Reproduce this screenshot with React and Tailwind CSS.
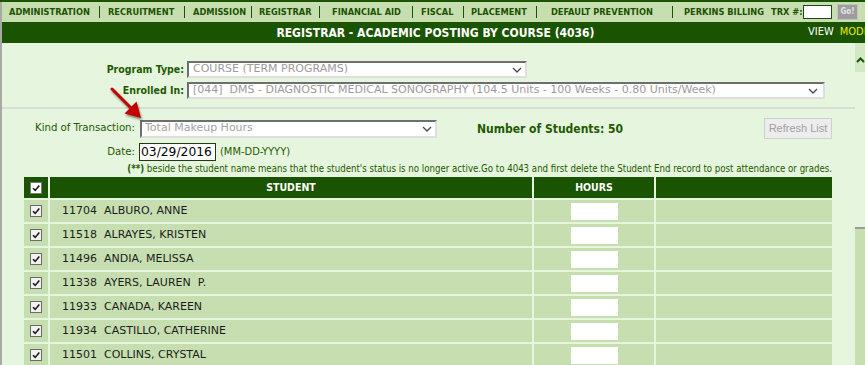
const cond = "font-['DejaVu_Sans_Condensed','DejaVu_Sans',sans-serif]";
const dv = "font-['DejaVu_Sans',sans-serif]";

function Sep({ cls }) {
  return <span className={`w-px h-[12px] bg-[#1d5200] shrink-0 ${cls}`} />;
}

function Chevron() {
  return (
    <svg width="10" height="6" viewBox="0 0 10 6" className="shrink-0">
      <path d="M1 1 L5 5 L9 1" fill="none" stroke="#4a4a4a" strokeWidth="1.3" />
    </svg>
  );
}

function Check({ header }) {
  return (
    <span
      className={`flex items-center justify-center w-[12px] h-[12px] border ${
        header ? "border-[#7a7a7a] bg-white" : "border-[#6b6b6b] bg-[#f2f2f2]"
      }`}
    >
      <svg width="10" height="10" viewBox="0 0 10 10">
        <path d="M2 5.2 L4.2 7.4 L8.3 2.4" fill="none" stroke="#1a1a1a" strokeWidth="1.6" />
      </svg>
    </span>
  );
}

const students = [
  ["11704", "ALBURO, ANNE"],
  ["11518", "ALRAYES, KRISTEN"],
  ["11496", "ANDIA, MELISSA"],
  ["11338", "AYERS, LAUREN\u00a0 P."],
  ["11933", "CANADA, KAREEN"],
  ["11934", "CASTILLO, CATHERINE"],
  ["11501", "COLLINS, CRYSTAL"],
];

export default function App() {
  return (
    <div className="relative w-[865px] h-[365px] overflow-hidden bg-[#e6f5dd] flex flex-col">
      <div className="h-[2px] bg-[#1a5400] shrink-0" />
      <div className="flex flex-1 min-h-0">
        <div className="w-[2px] bg-[#a9a9a9] shrink-0" />
        <div className="flex-1 flex flex-col min-w-0">
          {/* nav */}
          <div
            className={`h-[20px] shrink-0 bg-[#c7dfb0] flex items-center pl-[7px] whitespace-nowrap text-[9.2px] font-bold text-[#1d5200] ${cond}`}
          >
            <span className="w-[90px] shrink-0">ADMINISTRATION</span>
            <Sep cls="mr-[8px]" />
            <span className="w-[76px] shrink-0">RECRUITMENT</span>
            <Sep cls="mr-[8px]" />
            <span className="w-[58px] shrink-0">ADMISSION</span>
            <Sep cls="mr-[7px]" />
            <span className="w-[60px] shrink-0">REGISTRAR</span>
            <Sep cls="mr-[12px]" />
            <span className="w-[80px] shrink-0">FINANCIAL AID</span>
            <Sep cls="mr-[8px]" />
            <span className="w-[42px] shrink-0">FISCAL</span>
            <Sep cls="mr-[7px]" />
            <span className="w-[65px] shrink-0">PLACEMENT</span>
            <Sep cls="mr-[14px]" />
            <span className="w-[121px] shrink-0">DEFAULT PREVENTION</span>
            <Sep cls="mr-[11px]" />
            <span className="w-[87px] shrink-0">PERKINS BILLING</span>
            <span className="w-[32px] shrink-0">TRX #:</span>
            <span className="w-[29px] h-[14px] bg-white border border-[#1d4a10] shrink-0" />
            <span className="ml-[5px] w-[21px] h-[16px] bg-[#9d9d9d] border border-[#c4c4c4] text-[#e6e6e6] text-[8px] flex items-center justify-center shrink-0">
              Go!
            </span>
          </div>
          {/* header */}
          <div className="h-[21px] shrink-0 bg-[#1a5400] flex items-center whitespace-nowrap overflow-hidden">
            <div className={`w-[806px] shrink-0 pl-[61px] text-center text-white font-bold text-[12px] ${cond}`}>
              REGISTRAR - ACADEMIC POSTING BY COURSE (4036)
            </div>
            <span className={`text-white text-[11px] ${cond}`}>VIEW</span>
            <span className={`ml-[6px] text-[#eeee00] text-[11px] ${cond}`}>MODIFY</span>
          </div>
          {/* body */}
          <div className="flex flex-1 min-h-0">
            <div className="w-[853px] shrink-0 flex flex-col">
              {/* program form */}
              <div className="pt-[18px] pb-[8px] border-b-2 border-[#d8ddd3] flex flex-col gap-[4px]">
                <div className="flex items-center h-[17px]">
                  <span className={`w-[182px] text-right font-bold text-[10.5px] text-[#1e5a00] ${cond}`}>
                    Program Type:
                  </span>
                  <div className="ml-[3px] w-[340px] h-[17px] bg-white border-t-2 border-l-2 border-[#6e6e6e] border-r-2 border-b-2 border-r-[#dedede] border-b-[#dedede] flex items-center pl-[4px] pr-[3px]">
                    <span className={`flex-1 text-[11px] text-[#9c9c9c] whitespace-nowrap overflow-hidden ${dv}`}>
                      COURSE (TERM PROGRAMS)
                    </span>
                    <Chevron />
                  </div>
                </div>
                <div className="flex items-center h-[17px]">
                  <span className={`w-[182px] text-right font-bold text-[10.5px] text-[#1e5a00] ${cond}`}>
                    Enrolled In:
                  </span>
                  <div className="ml-[3px] w-[638px] h-[17px] bg-white border-t-2 border-l-2 border-[#6e6e6e] border-r-2 border-b-2 border-r-[#dedede] border-b-[#dedede] flex items-center pl-[4px] pr-[5px]">
                    <span className={`flex-1 text-[11px] text-[#9c9c9c] whitespace-nowrap overflow-hidden ${dv}`}>
                      [044]{"\u00a0 "}DMS - DIAGNOSTIC MEDICAL SONOGRAPHY (104.5 Units - 100 Weeks - 0.80 Units/Week)
                    </span>
                    <Chevron />
                  </div>
                </div>
              </div>

              <div className="pl-[22px] pr-[23px] flex flex-col">
                {/* kind row */}
                <div className="mt-[9px] h-[21px] flex items-center">
                  <span className={`w-[111px] shrink-0 text-right text-[11.3px] text-[#1e5a00] ${cond}`}>
                    Kind of Transaction:
                  </span>
                  <div className="ml-[5px] w-[297px] h-[18px] bg-white border-t-2 border-l-2 border-[#6e6e6e] border-r-2 border-b-2 border-r-[#dedede] border-b-[#dedede] flex items-center pl-[3px] pr-[3px]">
                    <span className={`flex-1 text-[11px] text-[#a3a3a3] whitespace-nowrap overflow-hidden ${dv}`}>
                      Total Makeup Hours
                    </span>
                    <Chevron />
                  </div>
                  <span className={`ml-[40px] font-bold text-[12px] text-[#1e5a00] ${cond}`}>
                    Number of Students: 50
                  </span>
                  <span className="ml-auto w-[68px] h-[21px] border border-[#cfcfcf] bg-[#ededed] flex items-center justify-center text-[11px] text-[#a0a0a0] font-['Liberation_Sans',Arial,sans-serif]">
                    Refresh List
                  </span>
                </div>
                {/* date row */}
                <div className="mt-[4px] h-[18px] flex items-center">
                  <span className={`w-[111px] shrink-0 text-right text-[11.3px] text-[#1e5a00] ${cond}`}>
                    Date:
                  </span>
                  <div className={`ml-[4px] w-[77px] h-[18px] bg-white border border-[#1d3d10] flex items-center pl-[1px] text-[12.3px] text-black ${dv}`}>
                    03/29/2016
                  </div>
                  <span className={`ml-[4px] text-[11px] text-[#1e5a00] ${cond}`}>(MM-DD-YYYY)</span>
                </div>
                {/* note */}
                <div className={`h-[16px] flex items-center justify-end whitespace-nowrap text-[9.6px] text-[#1e5a00] ${cond}`}>
                  <span className="font-bold">(**)</span>
                  <span>
                    &nbsp;beside the student name means that the student's status is no longer active.Go to 4043 and first delete the Student End record to post attendance or grades.
                  </span>
                </div>
                {/* table */}
                <div className="flex flex-col gap-y-[2px]">
                  <div className="grid grid-cols-[24px_482px_120px_176px] gap-x-[2px] h-[21px]">
                    <div className="bg-[#1a5400] flex items-center justify-center">
                      <Check header />
                    </div>
                    <div className={`bg-[#1a5400] flex items-center justify-center text-white font-bold text-[10.5px] ${cond}`}>
                      STUDENT
                    </div>
                    <div className={`bg-[#1a5400] flex items-center justify-center text-white font-bold text-[10.5px] ${cond}`}>
                      HOURS
                    </div>
                    <div className="bg-[#1a5400]" />
                  </div>
                  {students.map(([id, name]) => (
                    <div key={id} className="grid grid-cols-[24px_482px_120px_176px] gap-x-[2px] h-[22px]">
                      <div className="bg-[#c7dfb0] flex items-center justify-center">
                        <Check />
                      </div>
                      <div className={`bg-[#c7dfb0] flex items-center pl-[12px] text-[11px] text-[#1c1c1c] whitespace-nowrap ${dv}`}>
                        {id}
                        {"\u00a0 "}
                        {name}
                      </div>
                      <div className="bg-[#c7dfb0] flex items-center justify-center">
                        <span className="w-[47px] h-[17px] bg-white" />
                      </div>
                      <div className="bg-[#c7dfb0]" />
                    </div>
                  ))}
                </div>
              </div>
            </div>
            {/* scrollbar */}
            <div className="w-[10px] shrink-0 flex flex-col">
              <div className="h-[29px] bg-[#d3e9c4] flex items-start justify-center pt-[14px]">
                <svg width="9" height="6" viewBox="0 0 9 6">
                  <path d="M1 5 L4.5 1.5 L8 5" fill="none" stroke="#1a5400" strokeWidth="2" />
                </svg>
              </div>
              <div className="h-[155px]" />
              <div className="flex-1 border-t-2 border-[#9a9a9a] bg-[#c7dfb0]" />
            </div>
          </div>
        </div>
      </div>
      {/* annotation arrow */}
      <svg
        className="absolute left-[100px] top-[80px] drop-shadow-[1px_2px_1px_rgba(0,0,0,0.45)]"
        width="50"
        height="45"
        viewBox="0 0 50 45"
      >
        <path d="M12 9 L32 29" stroke="#c40000" strokeWidth="3" strokeLinecap="round" />
        <polygon points="41,38 24.5,33.5 36.5,21.5" fill="#c40000" />
      </svg>
    </div>
  );
}
